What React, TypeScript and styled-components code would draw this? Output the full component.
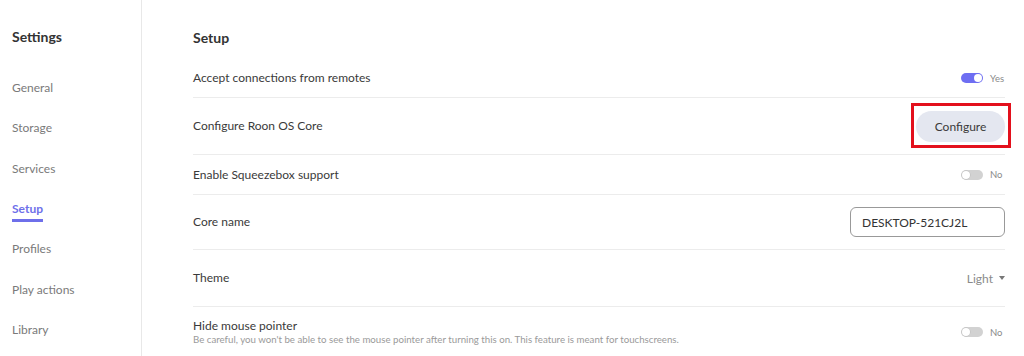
import React from 'react'
import styled, { createGlobalStyle } from 'styled-components'

const GlobalStyle = createGlobalStyle`
    html, body {
        margin: 0;
        padding: 0;
        background: #fff;
    }
    body {
        font-family: Lato, 'Liberation Sans', sans-serif;
        color: #333;
    }
`

const navItems = ['General', 'Storage', 'Services', 'Setup', 'Profiles', 'Play actions', 'Library']

const Toggle = ({ on }: { on: boolean }) => (
    <ToggleWrap>
        <Track $on={on}>
            <Knob $on={on} />
        </Track>
        <ToggleLabel>{on ? 'Yes' : 'No'}</ToggleLabel>
    </ToggleWrap>
)

export default function App() {
    return (
        <Page>
            <GlobalStyle />
            <Sidebar>
                <SideTitle>Settings</SideTitle>
                <Nav>
                    {navItems.map((item) => (
                        <NavItem key={item} $active={item === 'Setup'}>{item}</NavItem>
                    ))}
                </Nav>
            </Sidebar>
            <Main>
                <Heading>Setup</Heading>
                <Row $h={39}>
                    <Label>Accept connections from remotes</Label>
                    <Toggle on />
                </Row>
                <Row $h={57}>
                    <Label>Configure Roon OS Core</Label>
                    <Highlight>
                        <PillButton>Configure</PillButton>
                    </Highlight>
                </Row>
                <Row $h={40}>
                    <Label>Enable Squeezebox support</Label>
                    <Toggle on={false} />
                </Row>
                <Row $h={55}>
                    <Label>Core name</Label>
                    <TextInput defaultValue='DESKTOP-521CJ2L' />
                </Row>
                <Row $h={57}>
                    <Label>Theme</Label>
                    <Select>
                        Light
                        <Caret />
                    </Select>
                </Row>
                <Row $h={50} $last>
                    <LabelCol>
                        <Label>Hide mouse pointer</Label>
                        <Hint>Be careful, you won't be able to see the mouse pointer after turning this on. This feature is meant for touchscreens.</Hint>
                    </LabelCol>
                    <Toggle on={false} />
                </Row>
            </Main>
        </Page>
    )
}

const Page = styled.div`
    display: flex;
    min-height: 356px;
`

const Sidebar = styled.aside`
    width: 142px;
    flex-shrink: 0;
    border-right: 1px solid #e8e8e8;
    box-sizing: border-box;
    padding: 27px 0 0 12px;
`

const SideTitle = styled.div`
    font-size: 14px;
    font-weight: 700;
    line-height: 20px;
    color: #333;
`

const Nav = styled.nav`
    display: flex;
    flex-direction: column;
    gap: 20.33px;
    margin-top: 31px;
`

const NavItem = styled.div<{ $active?: boolean }>`
    font-size: 12px;
    line-height: 20px;
    color: ${(p) => (p.$active ? '#6e6fea' : '#7a7a7a')};
    font-weight: ${(p) => (p.$active ? 700 : 400)};
    text-decoration: ${(p) => (p.$active ? 'underline' : 'none')};
    text-decoration-thickness: 3px;
    text-underline-offset: 6px;
    text-decoration-skip-ink: none;
`

const Main = styled.main`
    flex: 1;
    padding: 28px 19px 0 51px;
    box-sizing: border-box;
`

const Heading = styled.h2`
    margin: 0 0 11px;
    font-size: 14px;
    font-weight: 700;
    line-height: 20px;
    color: #333;
`

const Row = styled.div<{ $h: number; $last?: boolean }>`
    display: flex;
    align-items: center;
    justify-content: space-between;
    height: ${(p) => p.$h}px;
    box-sizing: border-box;
    border-bottom: ${(p) => (p.$last ? 'none' : '1px solid #ececec')};
`

const Label = styled.div`
    font-size: 12px;
    line-height: 14px;
    color: #3a3a3a;
`

const LabelCol = styled.div`
    display: flex;
    flex-direction: column;
`

const Hint = styled.div`
    font-size: 9.7px;
    line-height: 12px;
    color: #9a9a9a;
`

const ToggleWrap = styled.div`
    display: flex;
    align-items: center;
    gap: 7px;
`

const Track = styled.div<{ $on: boolean }>`
    position: relative;
    width: 22px;
    height: 10px;
    border-radius: 5px;
    background: ${(p) => (p.$on ? '#6e6ef2' : '#d2d2d2')};
`

const Knob = styled.div<{ $on: boolean }>`
    position: absolute;
    top: 1px;
    left: ${(p) => (p.$on ? '13px' : '1px')};
    width: 8px;
    height: 8px;
    border-radius: 50%;
    background: #fff;
    box-shadow: ${(p) => (p.$on ? 'none' : '0 0 0 0.5px #bbb')};
`

const ToggleLabel = styled.span`
    font-size: 9.5px;
    color: #8a8a8a;
    width: 15px;
`

const Highlight = styled.div`
    position: relative;
    &::after {
        content: '';
        position: absolute;
        top: -8px;
        bottom: -6px;
        left: -5px;
        right: -6px;
        border: 3px solid #e3101c;
        pointer-events: none;
    }
`

const PillButton = styled.button`
    display: block;
    width: 89px;
    height: 31px;
    border: none;
    border-radius: 16px;
    background: #e4e7f0;
    font-family: Lato, 'Liberation Sans', sans-serif;
    font-size: 12px;
    color: #3a3a3a;
    padding: 0;
`

const TextInput = styled.input`
    width: 155px;
    height: 30px;
    box-sizing: border-box;
    border: 1px solid #999;
    border-radius: 6px;
    padding: 0 11px;
    font-family: Lato, 'Liberation Sans', sans-serif;
    font-size: 12px;
    color: #333;
    outline: none;
`

const Select = styled.div`
    display: flex;
    align-items: center;
    gap: 6px;
    font-size: 12px;
    color: #8a8a8a;
`

const Caret = styled.span`
    width: 0;
    height: 0;
    border-left: 3.5px solid transparent;
    border-right: 3.5px solid transparent;
    border-top: 4px solid #777;
`
